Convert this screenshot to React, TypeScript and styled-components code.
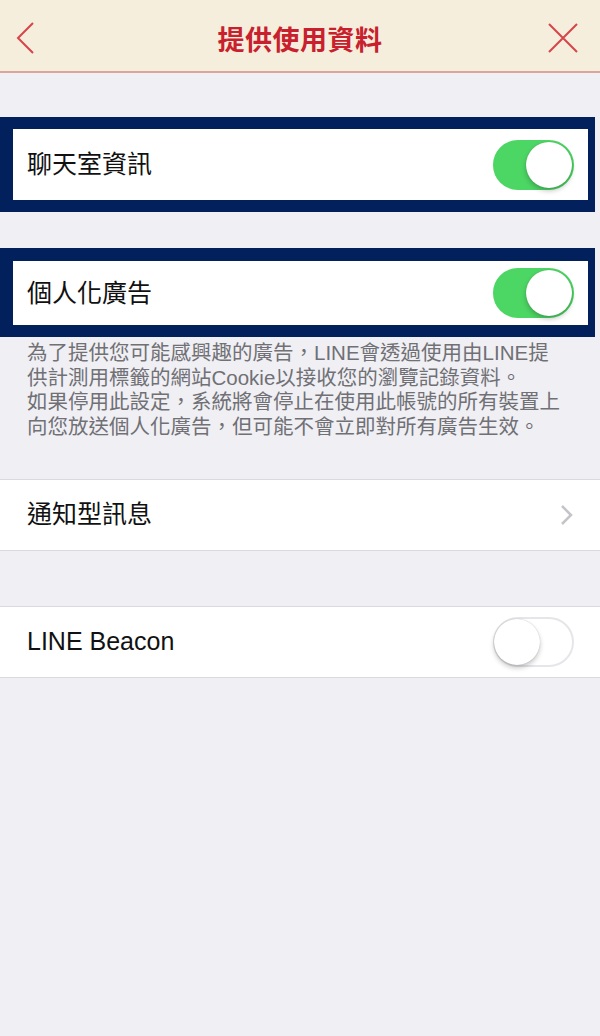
import styled, { createGlobalStyle } from 'styled-components';

const GlobalStyle = createGlobalStyle`
  html, body {
    margin: 0;
    padding: 0;
    background: #efeff4;
  }
  #root {
    min-height: 100vh;
    background: #efeff4;
  }
`;

const Page = styled.div`
  width: 600px;
  min-height: 1036px;
  background: #efeff4;
  font-family: 'Liberation Sans', 'Noto Sans CJK TC', sans-serif;
`;

const Header = styled.header`
  height: 66px;
  padding: 5px 18px 0 18px;
  display: grid;
  grid-template-columns: 1fr auto 1fr;
  align-items: center;
  background: #f5eedc;
  border-bottom: 2px solid #dba59d;
`;

const Title = styled.h1`
  margin: 0;
  color: #c8202d;
  font-family: 'Noto Sans CJK TC', sans-serif;
  font-size: 27px;
  font-weight: 700;
  letter-spacing: 0.5px;
  line-height: 1;
`;

const IconBtn = styled.div<{ $end?: boolean }>`
  display: flex;
  justify-content: ${(p) => (p.$end ? 'flex-end' : 'flex-start')};
  align-items: center;
  margin: ${(p) => (p.$end ? '0 3px 0 0' : '0 0 0 -2px')};
`;

const Section = styled.div<{ $top: number }>`
  margin-top: ${(p) => p.$top}px;
`;

const Highlight = styled.div<{ $top: number; $bottom: number }>`
  width: 575px;
  border: solid #01205c;
  border-width: ${(p) => p.$top}px 7px ${(p) => p.$bottom}px 13px;
`;

const Row = styled.div<{ $h: number; $inset?: boolean }>`
  height: ${(p) => p.$h}px;
  display: flex;
  align-items: center;
  justify-content: space-between;
  background: #fff;
  padding: ${(p) => (p.$inset ? '0 14px 0 14px' : '0 26px 0 27px')};
  ${(p) => (p.$inset ? '' : 'border-top: 1px solid #d9d9de; border-bottom: 1px solid #d9d9de;')}
`;

const Label = styled.span`
  color: #111;
  font-family: 'Liberation Sans', 'Noto Sans CJK TC', sans-serif;
  font-size: 25px;
  line-height: 1;
`;

const Track = styled.div<{ $on: boolean }>`
  position: relative;
  width: 81px;
  height: 50px;
  box-sizing: border-box;
  border-radius: 25px;
  background: ${(p) => (p.$on ? '#4cd663' : '#fff')};
  border: 2px solid ${(p) => (p.$on ? '#4cd663' : '#e6e6ea')};
`;

const Knob = styled.div<{ $on: boolean }>`
  position: absolute;
  top: 0;
  left: ${(p) => (p.$on ? '31px' : '-1px')};
  width: 46px;
  height: 46px;
  border-radius: 50%;
  background: #fff;
  box-shadow: 0 3px 5px rgba(0, 0, 0, 0.22), 0 0 1px rgba(0, 0, 0, 0.25);
`;

const Note = styled.p`
  margin: 0;
  padding: 4px 20px 0 27px;
  color: #707075;
  font-family: 'Liberation Sans', 'Noto Sans CJK TC', sans-serif;
  font-size: 20.5px;
  line-height: 24.7px;
  white-space: nowrap;
`;

const Toggle = ({ on }: { on: boolean }) => (
  <Track $on={on}>
    <Knob $on={on} />
  </Track>
);

const App = () => {
  return (
    <Page>
      <GlobalStyle />
      <Header>
        <IconBtn>
          <svg width="20" height="34" viewBox="0 0 20 34">
            <polyline points="17,2 2,17 17,32" fill="none" stroke="#d5454a" strokeWidth="2" />
          </svg>
        </IconBtn>
        <Title>提供使用資料</Title>
        <IconBtn $end>
          <svg width="32" height="32" viewBox="0 0 32 32">
            <path d="M2 2 L30 30 M30 2 L2 30" fill="none" stroke="#d5454a" strokeWidth="2" />
          </svg>
        </IconBtn>
      </Header>

      <Section $top={44}>
        <Highlight $top={12} $bottom={12}>
          <Row $h={71} $inset>
            <Label>聊天室資訊</Label>
            <Toggle on />
          </Row>
        </Highlight>
      </Section>

      <Section $top={36}>
        <Highlight $top={13} $bottom={12}>
          <Row $h={64} $inset>
            <Label>個人化廣告</Label>
            <Toggle on />
          </Row>
        </Highlight>
        <Note>
          為了提供您可能感興趣的廣告，LINE會透過使用由LINE提
          <br />
          供計測用標籤的網站Cookie以接收您的瀏覽記錄資料。
          <br />
          如果停用此設定，系統將會停止在使用此帳號的所有裝置上
          <br />
          向您放送個人化廣告，但可能不會立即對所有廣告生效。
        </Note>
      </Section>

      <Section $top={39}>
        <Row $h={70}>
          <Label>通知型訊息</Label>
          <svg width="14" height="22" viewBox="0 0 14 22">
            <polyline points="2,2 11,11 2,20" fill="none" stroke="#c4c4c9" strokeWidth="2.5" />
          </svg>
        </Row>
      </Section>

      <Section $top={55}>
        <Row $h={70}>
          <Label>LINE Beacon</Label>
          <Toggle on={false} />
        </Row>
      </Section>
    </Page>
  );
};

export default App;
